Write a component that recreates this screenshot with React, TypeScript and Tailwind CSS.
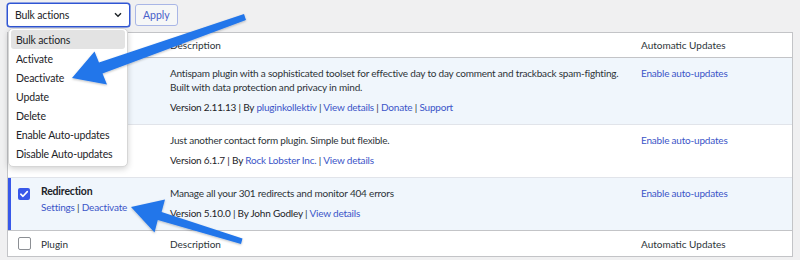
import React from "react";

const link = "text-[#3b55c8]";
const cols = "grid grid-cols-[33px_121px_471px_1fr]";

function Check({ checked }: { checked?: boolean }) {
  if (checked)
    return (
      <div className="w-[12px] h-[12px] rounded-[2px] bg-[#3858e9] flex items-center justify-center">
        <svg width="10" height="10" viewBox="0 0 10 10">
          <path d="M1.8 5.2 L4 7.3 L8.3 2.6" stroke="white" strokeWidth="1.6" fill="none" strokeLinecap="round" strokeLinejoin="round" />
        </svg>
      </div>
    );
  return <div className="w-[13px] h-[13px] rounded-[2px] bg-white border border-[#8c8f94]" />;
}

function Sep() {
  return <span className="text-[#2c3338]"> | </span>;
}

export default function App() {
  const items = ["Bulk actions", "Activate", "Deactivate", "Update", "Delete", "Enable Auto-updates", "Disable Auto-updates"];
  return (
    <div
      className="relative w-[800px] h-[260px] overflow-hidden bg-[#f0f0f1] text-[#2c3338] text-[10px] leading-[14px]"
      style={{ fontFamily: 'Lato, "Noto Sans", sans-serif' }}
    >
      {/* top bar */}
      <div className="flex items-center pl-[7px] pt-[3px] h-[27px]">
        <div className="w-[123px] h-[24px] bg-white border border-[#2f55d4] rounded-[3px] flex items-center justify-between pl-[7px] pr-[7px] text-[10.5px] tracking-[-0.15px] text-[#1d2327] shadow-[0_0_0_0.5px_#2f55d4]">
          <span>Bulk actions</span>
          <svg width="8" height="6" viewBox="0 0 8 6">
            <path d="M1 1.2 L4 4.3 L7 1.2" stroke="#1d2327" strokeWidth="1.4" fill="none" />
          </svg>
        </div>
        <div className="ml-[5px] h-[22px] px-[7px] flex items-center bg-[#f6f7f7] border border-[#a9b6e6] rounded-[3px] text-[10.5px] text-[#4860c9]">
          Apply
        </div>
      </div>

      {/* table */}
      <div className="mx-[7px] mt-[5px] bg-white border border-[#c3c4c7]">
        {/* header (first two cells sit under the open dropdown) */}
        <div className={`${cols} h-[25px] items-center border-b border-[#c3c4c7] text-[#2c3338]`}>
          <div className="pl-[10px]"><Check /></div>
          <div />
          <div className="pl-[8px]">Description</div>
          <div className="pl-[8px]">Automatic Updates</div>
        </div>

        <div className="tracking-[-0.2px]">
          {/* row 1 */}
          <div className={`${cols} bg-[#f0f6fc] border-b border-[#e1e4ea] shadow-[inset_3px_0_0_#3858e9] pt-[8px] pb-[10px]`}>
            <div className="pl-[10px] pt-[1px]"><Check /></div>
            <div />
            <div className="pl-[8px]">
              <div className="whitespace-nowrap">Antispam plugin with a sophisticated toolset for effective day to day comment and trackback spam-fighting.</div>
              <div>Built with data protection and privacy in mind.</div>
              <div className="mt-[6px] text-[#1d2327]">
                Version 2.11.13 | By <span className={link}>pluginkollektiv</span><Sep /><span className={link}>View details</span><Sep /><span className={link}>Donate</span><Sep /><span className={link}>Support</span>
              </div>
            </div>
            <div className={`pl-[8px] ${link}`}>Enable auto-updates</div>
          </div>

          {/* row 2 */}
          <div className={`${cols} bg-white border-b border-[#e1e4ea] pt-[8px] pb-[10px]`}>
            <div className="pl-[10px] pt-[1px]"><Check /></div>
            <div />
            <div className="pl-[8px]">
              <div>Just another contact form plugin. Simple but flexible.</div>
              <div className="mt-[6px] text-[#1d2327]">
                Version 6.1.7 | By <span className={link}>Rock Lobster Inc.</span><Sep /><span className={link}>View details</span>
              </div>
            </div>
            <div className={`pl-[8px] ${link}`}>Enable auto-updates</div>
          </div>

          {/* row 3 */}
          <div className={`${cols} bg-[#f0f6fc] border-b border-[#c3c4c7] shadow-[inset_3px_0_0_#3858e9] pt-[8px] pb-[10px]`}>
            <div className="pl-[10px] pt-[2px]"><Check checked /></div>
            <div className="-mt-[2px]">
              <div className="font-bold text-[#1d2327] text-[10.5px]">Redirection</div>
              <div className={`${link} mt-[2px]`}>Settings<Sep />Deactivate</div>
            </div>
            <div className="pl-[8px]">
              <div>Manage all your 301 redirects and monitor 404 errors</div>
              <div className="mt-[6px] text-[#1d2327]">
                Version 5.10.0 | By John Godley<Sep /><span className={link}>View details</span>
              </div>
            </div>
            <div className={`pl-[8px] ${link}`}>Enable auto-updates</div>
          </div>
        </div>

        {/* footer */}
        <div className={`${cols} h-[25px] items-center text-[#2c3338]`}>
          <div className="pl-[10px]"><Check /></div>
          <div>Plugin</div>
          <div className="pl-[8px]">Description</div>
          <div className="pl-[8px]">Automatic Updates</div>
        </div>
      </div>

      {/* dropdown */}
      <div className="absolute left-[8px] top-[28px] w-[120px] h-[139px] bg-white border border-[#d6d6d6] rounded-[5px] shadow-[0_2px_6px_rgba(0,0,0,0.18)] pt-[1px] px-[2px] text-[10.5px] tracking-[-0.15px] text-[#1d2327]">
        {items.map((it, i) => (
          <div
            key={it}
            className={`h-[19px] flex items-center pl-[5px] rounded-[3px] whitespace-nowrap ${i === 0 ? "bg-[#e3e3e3]" : ""}`}
          >
            {it}
          </div>
        ))}
      </div>

      {/* arrows */}
      <svg className="absolute left-0 top-0 pointer-events-none" width="800" height="260" viewBox="0 0 800 260">
        <defs>
          <filter id="sh" x="-20%" y="-20%" width="140%" height="140%">
            <feDropShadow dx="0" dy="1" stdDeviation="1" floodColor="#000" floodOpacity="0.25" />
          </filter>
        </defs>
        <g fill="#2476ea" filter="url(#sh)" strokeLinejoin="round">
          <polygon points="72,78 94.5,51.5 99,62.5 244,14 246,20 102.5,73.5 107,84.5" />
          <polygon points="131,207 165,199.5 161.6,212 242.5,238.5 241,244 157.8,220 154.5,232.5" />
        </g>
      </svg>
    </div>
  );
}
